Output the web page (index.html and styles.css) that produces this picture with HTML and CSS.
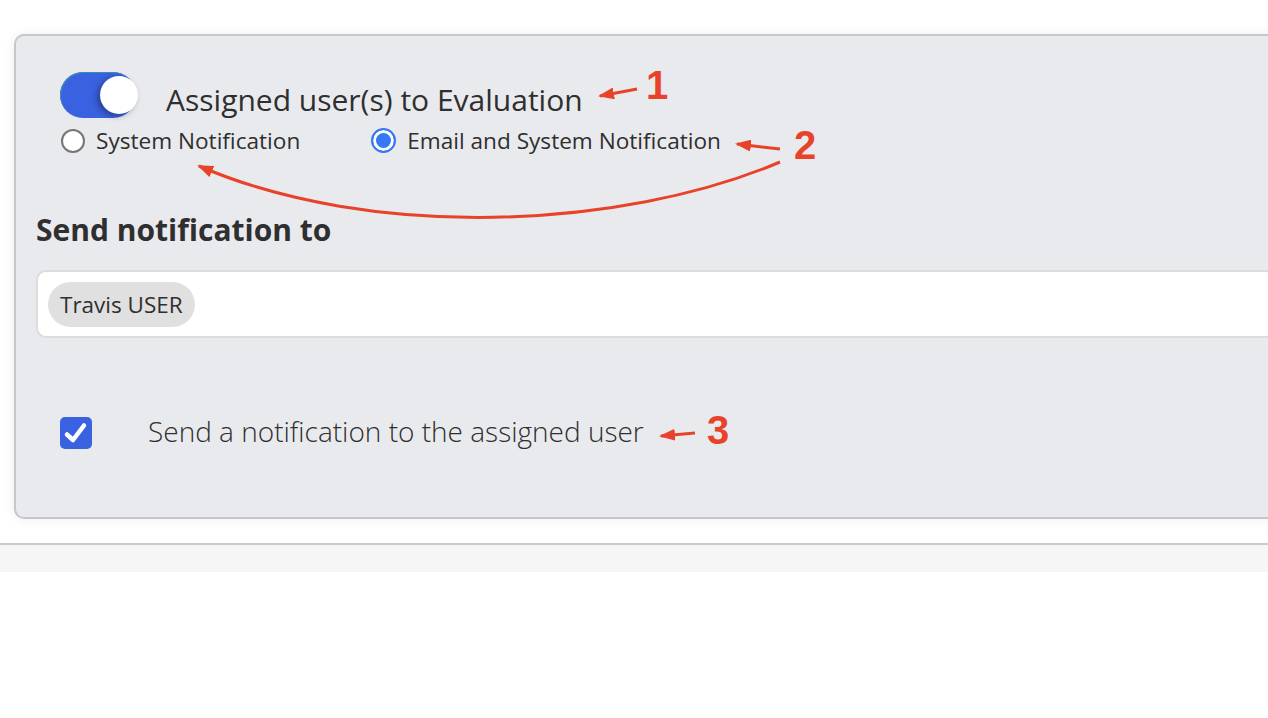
FILE: index.html
```html
<!DOCTYPE html>
<html lang="en">

<head>
    <title>Notification settings</title>
    <meta charset="UTF-8">
    <link rel="stylesheet" href="styles.css">
</head>

<body>
    <div class="nt-page">
        <div class="nt-card">
            <div class="nt-head">
                <div class="nt-toggle-row">
                    <span class="nt-switch"><span class="nt-knob"></span></span>
                    <span class="nt-title">Assigned user(s) to Evaluation</span>
                </div>
                <div class="nt-radios">
                    <label class="nt-radio-item">
                        <span class="nt-radio"></span>
                        System Notification
                    </label>
                    <label class="nt-radio-item">
                        <span class="nt-radio nt-on"></span>
                        Email and System Notification
                    </label>
                </div>
            </div>

            <h3 class="nt-heading">Send notification to</h3>
            <div class="nt-input">
                <span class="nt-chip">Travis USER</span>
            </div>

            <label class="nt-check-row">
                <span class="nt-check">
                    <svg width="32" height="32" viewBox="0 0 32 32">
                        <polyline points="7,17.5 13,23 24,8.5" fill="none" stroke="#fff" stroke-width="4.5"
                            stroke-linecap="round" stroke-linejoin="round" />
                    </svg>
                </span>
                <span class="nt-check-label">Send a notification to the assigned user</span>
            </label>
        </div>
    </div>
    <div class="nt-footer"></div>

    <!-- annotations drawn over the screenshot -->
    <svg class="nt-notes" width="1268" height="718" viewBox="0 0 1268 718">
        <defs>
            <marker id="head" markerUnits="userSpaceOnUse" viewBox="0 0 16 12" markerWidth="16" markerHeight="12"
                refX="14" refY="6" orient="auto">
                <path d="M0,0 L16,6 L0,12 z" fill="#e8432a" />
            </marker>
        </defs>
        <g fill="none" stroke="#e8432a" stroke-width="3" marker-end="url(#head)">
            <path d="M637,89 L600,96" />
            <path d="M780,149 L737,144" />
            <path d="M780,162 C620,230 370,240 199,166" />
            <path d="M695,433 L661,436" />
        </g>
        <g class="nt-num">
            <text x="646" y="99">1</text>
            <text x="794" y="159">2</text>
            <text x="707" y="444">3</text>
        </g>
    </svg>
</body>

</html>
```

FILE: styles.css
```css
* {
    box-sizing: border-box;
}

body {
    margin: 0;
    background-color: #ffffff;
    font-family: 'Open Sans', 'Noto Sans', sans-serif;
    color: #2f2f2f;
    overflow: hidden;
}

.nt-page {
    padding: 34px 0 0 14px;
}

.nt-card {
    margin-right: -30px;
    padding: 36px 0 68px 20px;
    background-color: #e9eaee;
    border: 2px solid #c6c6cb;
    border-radius: 10px;
    box-shadow: 0 0 12px rgba(0, 0, 0, 0.07);
}

.nt-head {
    margin-left: 24px;
}

.nt-toggle-row {
    display: flex;
    align-items: flex-start;
}

.nt-switch {
    width: 76px;
    height: 46px;
    border-radius: 23px;
    background-color: #3a62e0;
    box-shadow: inset 1px 1px 0 #3b8db0;
    display: flex;
    align-items: center;
    justify-content: flex-end;
}

.nt-knob {
    width: 38px;
    height: 38px;
    margin-right: -2px;
    border-radius: 50%;
    background-color: #ffffff;
    box-shadow: -3px 2px 6px rgba(0, 0, 0, 0.35);
}

.nt-title {
    margin-left: 30px;
    padding-top: 9px;
    font-size: 30px;
    line-height: 38px;
}

.nt-radios {
    display: flex;
    margin-top: 9px;
}

.nt-radio-item {
    display: flex;
    align-items: center;
    gap: 11px;
    font-size: 22.6px;
    line-height: 24px;
}

.nt-radio-item + .nt-radio-item {
    margin-left: 70px;
}

.nt-radio {
    width: 24px;
    height: 24px;
    margin-left: 1px;
    border-radius: 50%;
    border: 2px solid #757575;
    background-color: #ffffff;
}

.nt-radio.nt-on {
    width: 25px;
    height: 25px;
    border-color: #3478f6;
    background-color: #3478f6;
    box-shadow: inset 0 0 0 3px #ffffff;
}

.nt-heading {
    margin: 58px 0 0;
    font-size: 30px;
    line-height: 38px;
    font-weight: bold;
}

.nt-input {
    display: flex;
    margin-top: 21px;
    padding: 10px 10px 9px;
    background-color: #ffffff;
    border: 2px solid #dcdcdc;
    border-right: none;
    border-radius: 10px 0 0 10px;
}

.nt-chip {
    height: 45px;
    padding: 0 12px;
    border-radius: 23px;
    background-color: #e0e0e0;
    font-size: 22.5px;
    line-height: 45px;
}

.nt-check-row {
    display: flex;
    align-items: flex-start;
    margin: 79px 0 0 24px;
}

.nt-check {
    width: 32px;
    height: 32px;
    border-radius: 5px;
    background-color: #3a62e0;
}

.nt-check svg {
    display: block;
}

.nt-check-label {
    margin-left: 56px;
    font-size: 28px;
    font-weight: 300;
    line-height: 28px;
}

.nt-footer {
    margin-top: 24px;
    height: 29px;
    background-color: #f6f6f6;
    border-top: 2px solid #cbcbcb;
}

.nt-notes {
    position: absolute;
    top: 0;
    left: 0;
    pointer-events: none;
}

.nt-num text {
    font-family: 'Liberation Sans', Arial, sans-serif;
    font-weight: bold;
    font-size: 40px;
    fill: #e8432a;
}
```
